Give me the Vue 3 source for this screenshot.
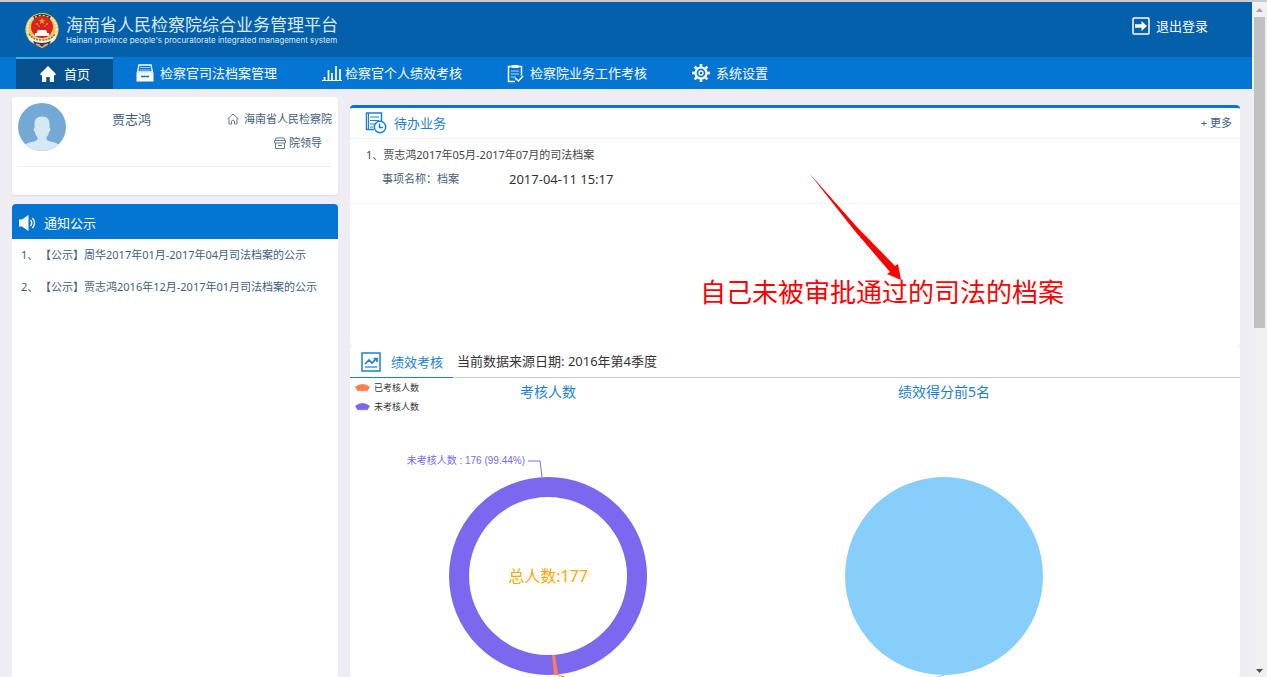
<script setup>
const navItems = [
  { id: 'home', label: '首页', active: true },
  { id: 'archive', label: '检察官司法档案管理' },
  { id: 'bars', label: '检察官个人绩效考核' },
  { id: 'clipboard', label: '检察院业务工作考核' },
  { id: 'gear', label: '系统设置' },
]
const notices = [
  '【公示】周华2017年01月-2017年04月司法档案的公示',
  '【公示】贾志鸿2016年12月-2017年01月司法档案的公示',
]
const legend = [
  { label: '已考核人数', color: '#ff7f50' },
  { label: '未考核人数', color: '#7b68ee' },
]
const teeth = [0, 45, 90, 135, 180, 225, 270, 315]
</script>

<template>
  <div class="window">
    <div class="page">
      <header class="banner">
        <svg class="emblem" viewBox="0 0 36 36" aria-hidden="true">
          <ellipse cx="18" cy="17.5" rx="16.6" ry="16.5" fill="#e9c766" />
          <ellipse cx="18" cy="17.5" rx="14.6" ry="14.8" fill="none" stroke="#f7ecc2" stroke-width="2" stroke-dasharray="2 1" />
          <path d="M9 4.6Q18-1 27 4.6L25 8Q18 4 11 8Z" fill="#3a3830" />
          <path d="M11 5.5Q18 1.5 25 5.5" fill="none" stroke="#f0cf5f" stroke-width="1.5" stroke-dasharray="2 2" />
          <circle cx="18" cy="15" r="11" fill="#d9241c" />
          <path d="M18 6l.9 2.1 2.2.2-1.7 1.5.5 2.2-1.9-1.2-1.9 1.2.5-2.2-1.7-1.5 2.2-.2z" fill="#e8a03c" />
          <circle cx="13" cy="12" r="1" fill="#e8903c" /><circle cx="23" cy="12" r="1" fill="#e8903c" />
          <circle cx="15" cy="14" r=".8" fill="#e8903c" /><circle cx="21" cy="14" r=".8" fill="#e8903c" />
          <path d="M14 18h8l1 2v2H13v-2zM11 21h14v3H11z" fill="#fff" />
          <path d="M3 20Q6 27 18 27Q30 27 33 20L31 28Q26 32 18 32Q10 32 5 28Z" fill="#f5edd0" />
          <path d="M5 22Q9 28 18 28Q27 28 31 22" fill="none" stroke="#70705c" stroke-width="1.5" stroke-dasharray="2 1" />
          <path d="M9 29q9 4 18 0l-2 4-4-1-3 3.5-3-3.5-4 1z" fill="#39366b" />
          <path d="M12 32l6 3.5 6-3.5" fill="none" stroke="#d8aa4a" stroke-width="1.5" />
        </svg>
        <div class="brand">
          <h1>海南省人民检察院综合业务管理平台</h1>
          <p>Hainan province people's procuratorate integrated management system</p>
        </div>
        <button class="logout" type="button">
          <svg width="18" height="18" viewBox="0 0 18 18" aria-hidden="true">
            <rect x="1" y="1" width="16" height="16" rx="1" fill="none" stroke="#fff" stroke-width="1.5" />
            <path d="M3 7.2h6.5V4l5.5 5-5.5 5v-3.2H3z" fill="#fff" />
          </svg>
          退出登录
        </button>
      </header>

      <nav class="nav">
        <a v-for="item in navItems" :key="item.id" href="#" :class="['nav-item', item.id, { active: item.active }]">
          <svg v-if="item.id === 'home'" width="16" height="16" viewBox="0 0 16 16" aria-hidden="true">
            <path d="M8 0l8 8-1 1.2h-1V16H9.8v-5H6.2v5H2V9.2H1L0 8z" fill="#fff" />
          </svg>
          <svg v-else-if="item.id === 'archive'" width="18" height="18" viewBox="0 0 18 18" aria-hidden="true">
            <path d="M3 1h12l1.5 7h-15z" fill="none" stroke="#fff" stroke-width="1.3" />
            <path d="M4 3.5h10M3.5 6h11" stroke="#9dccf3" />
            <path d="M.5 8.5h17v9H.5z" fill="#fff" />
            <path d="M5 12.5h8" stroke="#0575d3" stroke-width="1.5" />
          </svg>
          <svg v-else-if="item.id === 'bars'" width="20" height="17" viewBox="0 0 20 17" aria-hidden="true">
            <path d="M0 15.5h20" stroke="#fff" />
            <path d="M2.5 16v-4M6.5 16V5M10 16V8M14 16V1M18 16V4" stroke="#fff" stroke-width="1.7" />
          </svg>
          <svg v-else-if="item.id === 'clipboard'" width="17" height="19" viewBox="0 0 17 19" aria-hidden="true">
            <path d="M8 17.5H1.5v-15h13v9" fill="none" stroke="#fff" stroke-width="1.5" />
            <path d="M4.5 1h7v3h-7z" fill="#fff" />
            <path d="M4 7h8M4 10h8M4 13h5" stroke="#b7daf7" />
            <path d="M8 14l3.5 3 4.5-5" fill="none" stroke="#fff" stroke-width="1.5" />
          </svg>
          <svg v-else width="18" height="18" viewBox="0 0 18 18" aria-hidden="true">
            <circle cx="9" cy="9" r="5.5" fill="none" stroke="#fff" stroke-width="2.2" />
            <circle cx="9" cy="9" r="2" fill="none" stroke="#fff" stroke-width="1.3" />
            <rect v-for="a in teeth" :key="a" x="7.7" y="0" width="2.6" height="3.5" fill="#fff" :transform="`rotate(${a} 9 9)`" />
          </svg>
          <span>{{ item.label }}</span>
        </a>
      </nav>

      <main class="content">
        <aside class="side">
          <section class="card profile">
            <div class="profile-top">
              <svg class="avatar" viewBox="0 0 48 48" aria-hidden="true">
                <defs><clipPath id="avatarClip"><circle cx="24" cy="24" r="24" /></clipPath></defs>
                <g clip-path="url(#avatarClip)">
                  <path d="M0 0h48v48H0z" fill="#73a9d4" />
                  <path d="M24 13.5c5.5 0 7.5 3 7.5 7.5v4c1.5 0 1 3.5-.5 4-.5 3-1.5 4-2.5 5v2.5c3 3 9.500 2 12.5 5.5v8H7v-8c3-3.5 9.5-2.5 12.5-5.500V34c-1-1-2-2-2.5-5-1.5-.5-2-4-.5-4v-4c0-4.5 2-7.5 7.5-7.5z" fill="#d6e8f6" />
                </g>
              </svg>
              <div class="person">贾志鸿</div>
              <ul class="org">
                <li>
                  <svg width="12" height="12" viewBox="0 0 12 12" fill="none" stroke="#5f7d94" aria-hidden="true"><path d="M.5 6L6 1l5.5 5M2 5.5V11h2.500V8Q6 6 7.5 8v3H10V5.5" /></svg>
                  海南省人民检察院
                </li>
                <li class="role">
                  <svg width="12" height="12" viewBox="0 0 12 12" fill="none" stroke="#5f7d94" aria-hidden="true"><path d="M2 1h8l1.5 3v2h-11V4zM1.5 6v5.5h9V6M.5 3.5h11M4 8.5h4" /></svg>
                  院领导
                </li>
              </ul>
            </div>
          </section>

          <section class="card notices">
            <h2>
              <svg width="18" height="16" viewBox="0 0 18 16" aria-hidden="true">
                <path d="M0 4.500h3L9.5 0v16L3 11.5H0z" fill="#fff" />
                <path d="M11.5 5q2.5 3 0 6M13.5 3q4 5 0 10" fill="none" stroke="#fff" stroke-width="1.3" />
              </svg>
              通知公示
            </h2>
            <ol>
              <li v-for="(text, i) in notices" :key="text"><span class="num">{{ i + 1 }}、</span><a href="#">{{ text }}</a></li>
            </ol>
          </section>
        </aside>

        <div class="main">
          <section class="card tasks">
            <div class="tasks-head">
              <svg width="22" height="22" viewBox="0 0 22 22" fill="none" stroke="#1a7fd6" aria-hidden="true">
                <path d="M9 17.5H1.5V1h15v8" stroke-width="1.5" />
                <path d="M3.5 1v16M5 5h9M5 8.5h9M5 12h5M5 15h3" />
                <circle cx="15" cy="15" r="5.7" stroke-width="1.5" />
                <path d="M14.5 11.5v4h3.5" stroke-width="1.5" />
              </svg>
              <h2>待办业务</h2>
              <a class="more" href="#">+ 更多</a>
            </div>
            <div class="task">
              <a class="task-title" href="#">1、贾志鸿2017年05月-2017年07月的司法档案</a>
              <div class="task-meta"><span>事项名称：档案</span><time>2017-04-11 15:17</time></div>
            </div>
            <svg class="arrow" viewBox="0 0 94 110" aria-hidden="true">
              <path d="M0 0L45 57 81 99 78 101 92 107 89 91 86 93 48 54Z" fill="#f00" />
            </svg>
            <p class="annotation">自己未被审批通过的司法的档案</p>
          </section>

          <section class="card perf">
            <div class="perf-head">
              <h2>
                <svg width="20" height="20" viewBox="0 0 20 20" fill="none" stroke="#1a7fd6" aria-hidden="true">
                  <rect x="1" y="1" width="18" height="18" stroke-width="1.5" />
                  <path d="M4 12l4-4 3 3 4-4M12.5 6.5H16V10" stroke-width="1.7" />
                  <path d="M4 15h12" stroke-width="1.2" />
                </svg>
                绩效考核
              </h2>
              <span>当前数据来源日期: 2016年第4季度</span>
            </div>
            <div class="charts">
              <figure>
                <ul class="legend">
                  <li v-for="l in legend" :key="l.label">
                    <svg width="15" height="8" viewBox="0 0 15 8" aria-hidden="true"><path d="M0 3Q7.500-3 15 3L12 7.5 10 6.5 9 7.5Q7.5 6 6 7.5L5 6.5 3 7.5Z" :fill="l.color" /></svg>
                    {{ l.label }}
                  </li>
                </ul>
                <figcaption>考核人数</figcaption>
                <svg class="plot" viewBox="0 0 396 300" aria-hidden="true">
                  <circle cx="198" cy="198" r="89" fill="none" stroke="#7b68ee" stroke-width="20" />
                  <path d="M202 277l2 20 4-1-3-19z" fill="#ff7f50" />
                  <path d="M206 296l8 3" stroke="#ff7f50" />
                  <path d="M178 83h12l2 16" fill="none" stroke="#7b68ee" />
                  <text x="175" y="86" class="slice" text-anchor="end">未考核人数 : 176 (99.44%)</text>
                  <text x="198" y="204" class="total" text-anchor="middle">总人数:177</text>
                </svg>
              </figure>
              <figure>
                <figcaption>绩效得分前5名</figcaption>
                <svg class="plot" viewBox="0 0 396 300" aria-hidden="true">
                  <circle cx="198" cy="198" r="99" fill="#87cefa" />
                  <path d="M198 297l-9 3" stroke="#87cefa" />
                </svg>
              </figure>
            </div>
          </section>
        </div>
      </main>
    </div>
    <div class="scrollbar" aria-hidden="true">
      <svg width="7" height="4" viewBox="0 0 7 4"><path d="M0 4l3.5-4L7 4z" fill="#a3a3a3" /></svg>
      <div class="track"><div class="thumb"></div></div>
      <svg width="7" height="4" viewBox="0 0 7 4"><path d="M0 0l3.5 4L7 0z" fill="#505050" /></svg>
    </div>
  </div>
</template>

<style>
body { margin: 0; }
</style>

<style scoped>
* { box-sizing: border-box; }
h1, h2, p, ul, ol, figure { margin: 0; padding: 0; font-weight: 400; list-style: none; }
a { color: inherit; text-decoration: none; }
svg { flex: none; display: block; }
.window {
  display: flex;
  height: 100vh;
  overflow: hidden;
  border-top: 2px solid #c9cccf;
  background: #eeedf3;
  color: #3f607a;
  font: 11px/24px "Noto Sans", "Noto Sans CJK SC", sans-serif;
}
.page { flex: 1; min-width: 0; display: flex; flex-direction: column; }
.banner {
  display: flex;
  align-items: center;
  flex: none;
  height: 55px;
  padding: 0 44px 0 24px;
  background: #0460aa;
  color: #fff;
}
.emblem { width: 36px; height: 36px; }
.brand { margin-left: 6px; flex: 1; color: #d9e9f7; }
.brand h1 { font-size: 17px; line-height: 20px; }
.brand p { font: 8px/10px Inter, "Liberation Sans", sans-serif; }
.logout {
  display: flex;
  align-items: center;
  gap: 6px;
  margin-bottom: 8px;
  padding: 0;
  border: 0;
  background: none;
  color: #fff;
  font: inherit;
  font-size: 13px;
}
.nav { display: flex; flex: none; height: 32px; padding-left: 16px; background: #0575d3; color: #fff; font-size: 13px; }
.nav-item { display: flex; align-items: center; gap: 6px; padding: 0 22px 0 23px; }
.nav-item.home { gap: 8px; padding: 0 23px 0 24px; }
.nav-item.bars { gap: 3px; }
.nav-item.active { background: #06508d; border-top: 2px solid #3fa9f5; }
.content { flex: 1; min-height: 0; display: flex; gap: 12px; padding: 8px 12px 0; }
.card { background: #fff; border-radius: 4px; }
.side { flex: none; width: 326px; display: flex; flex-direction: column; gap: 9px; }
.profile { height: 98px; padding: 6px 6px 0; box-shadow: 0 1px 2px #dedde5; }
.profile-top { display: flex; height: 64px; border-bottom: 1px solid #f0f0f0; }
.avatar { width: 48px; height: 48px; }
.person { flex: 1; margin-left: 46px; line-height: 32px; font-size: 13px; }
.org { padding-top: 4px; }
.org li { display: flex; align-items: center; gap: 5px; }
.org .role { justify-content: flex-end; padding-right: 10px; gap: 3px; }
.notices { flex: 1; border-radius: 4px 4px 0 0; }
.notices h2 {
  display: flex;
  align-items: center;
  gap: 7px;
  height: 35px;
  padding: 2px 7px 0;
  border-radius: 4px 4px 0 0;
  background: #0575d3;
  color: #fff;
  font-size: 13px;
}
.notices li { display: flex; height: 32px; padding-left: 9px; line-height: 32px; white-space: nowrap; }
.num { width: 19px; }
.main { flex: 1; min-width: 0; padding-top: 8px; display: flex; flex-direction: column; }
.tasks { position: relative; flex: none; height: 241px; border-top: 3px solid #0575d3; }
.tasks-head { display: flex; align-items: center; height: 31px; padding: 0 8px 0 15px; border-bottom: 1px solid #f0f0f0; }
.tasks-head h2 { flex: 1; margin-left: 7px; color: #1a7fd6; font-size: 13px; }
.task { height: 65px; padding: 4px 16px; border-bottom: 1px solid #f4f4f4; }
.task-title { display: block; color: #444; }
.task-meta { display: flex; padding-left: 16px; }
.task-meta span { width: 127px; }
.task-meta time { color: #333; font-size: 13px; }
.arrow { position: absolute; left: 459px; top: 65px; width: 94px; height: 110px; }
.annotation { position: absolute; left: 350px; top: 168px; color: #f00; font-size: 26px; line-height: 32px; white-space: nowrap; }
.perf { flex: 1; min-height: 0; }
.perf-head { display: flex; height: 32px; border-bottom: 1px solid #ccc; color: #333; font-size: 13px; line-height: 30px; }
.perf-head h2 {
  display: flex;
  align-items: center;
  gap: 10px;
  height: 32px;
  margin-right: 4px;
  padding: 0 10px 0 11px;
  border-bottom: 1px solid #1a7fd6;
  color: #1a7fd6;
  font-size: 13px;
}
.charts { display: grid; grid-template-columns: 1fr 1fr; width: 89%; }
figure { position: relative; height: 300px; }
figcaption { position: absolute; top: 0; left: 0; right: 0; text-align: center; color: #1a7fd6; font-size: 14px; line-height: 28px; }
.plot { width: 100%; height: 300px; }
.legend { position: absolute; top: 0; left: 5px; color: #333; font-size: 9px; }
.legend li { display: flex; align-items: center; gap: 4px; height: 19px; }
.slice { fill: #7b68ee; font: 10px "Liberation Sans", "Noto Sans CJK SC", sans-serif; }
.total { fill: #ffa500; font-size: 16px; }
.scrollbar { flex: none; width: 15px; display: flex; flex-direction: column; align-items: center; padding: 6px 0 4px; background: #f0f0f0; }
.track { flex: 1; width: 11px; padding: 5px 0; }
.thumb { height: 48%; background: #c1c1c1; }
</style>
